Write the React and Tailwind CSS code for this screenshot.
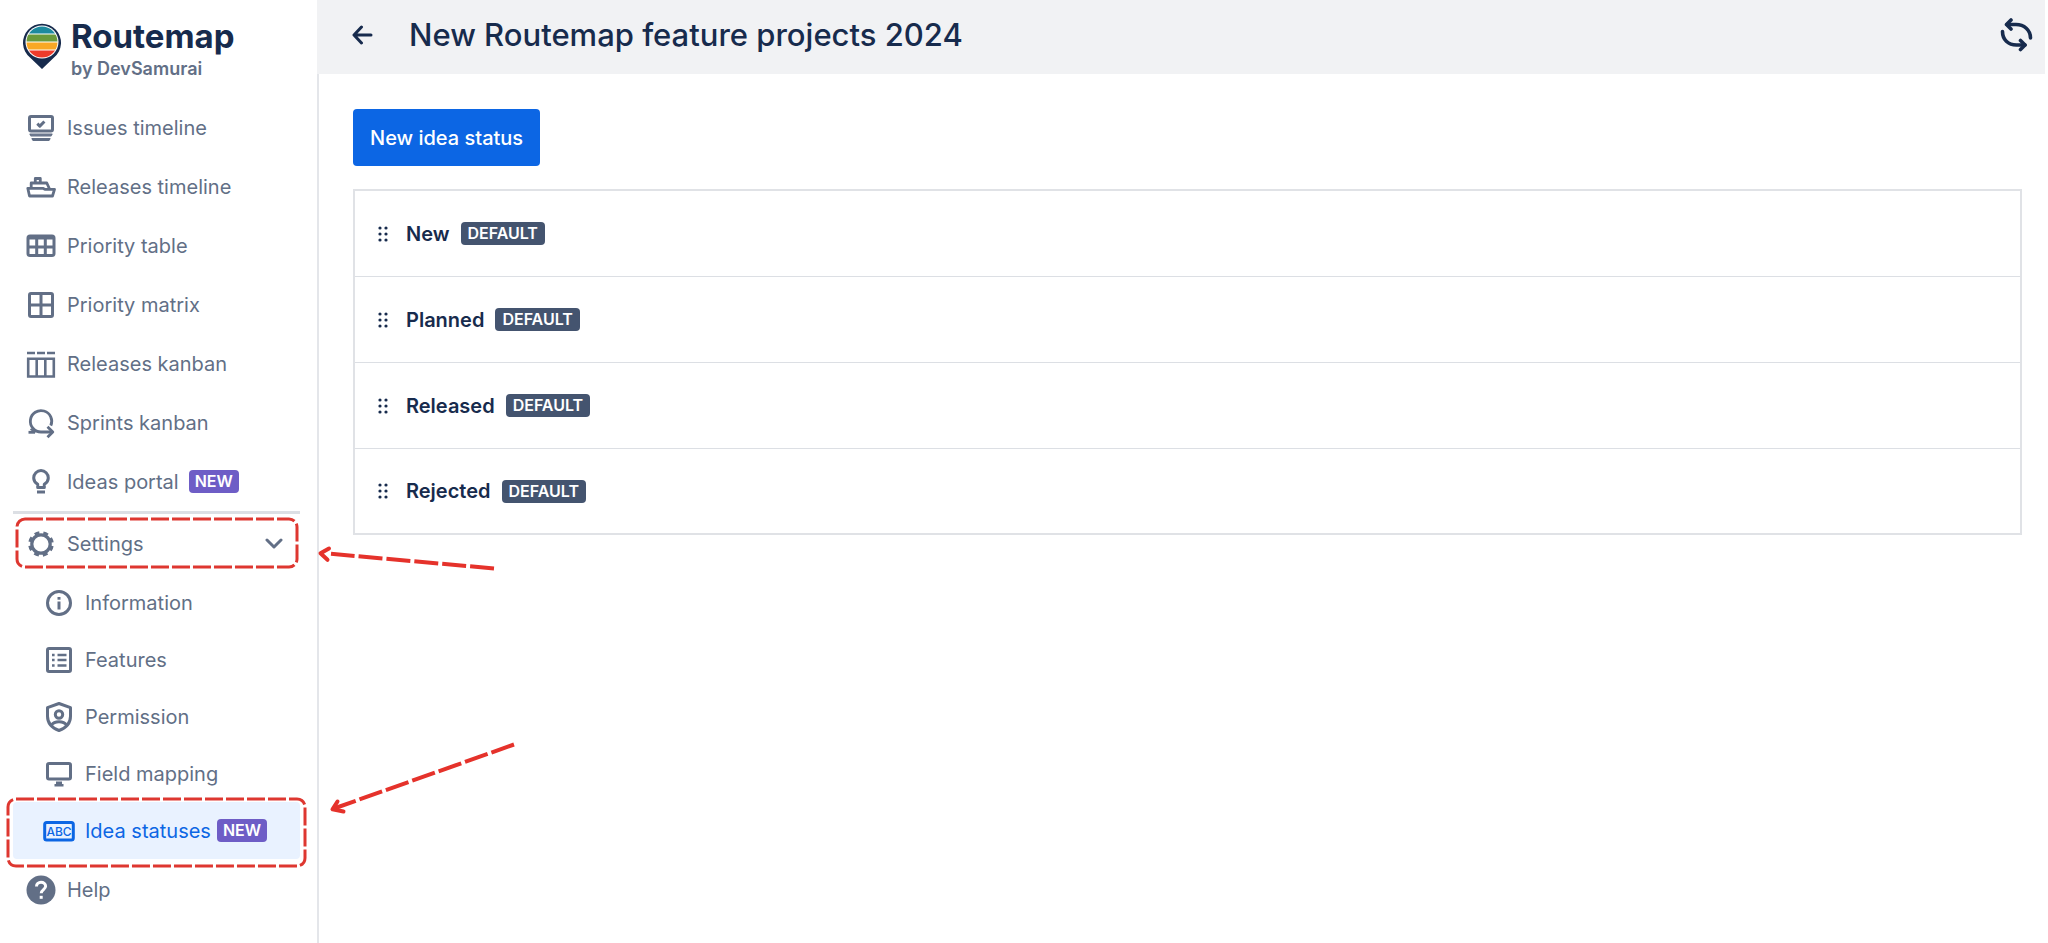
import React, { useState } from 'react';

const LogoMark = () => (
  <svg width="38" height="46" viewBox="0 0 38 46" aria-hidden="true" className="shrink-0">
    <defs>
      <clipPath id="logo-disc">
        <circle cx="19" cy="19" r="15.5" />
      </clipPath>
    </defs>
    <path d="M19 46 L7 34.500 A19 19 0 1 1 31 34.500 Z" fill="#172B4D" />
    <circle cx="19" cy="19" r="16.500" fill="#fff" />
    <g clipPath="url(#logo-disc)">
      <rect x="2" y="3" width="34" height="7.500" fill="#1D8A9E" />
      <rect x="2" y="11.500" width="34" height="7" fill="#6A9A3B" />
      <rect x="2" y="19.500" width="34" height="7" fill="#F9A825" />
      <rect x="2" y="27.500" width="34" height="8" fill="#EE3B2B" />
    </g>
  </svg>
);

const Glyph = ({ children }) => (
  <svg
    width="32"
    height="32"
    viewBox="0 0 32 32"
    fill="none"
    stroke="currentColor"
    strokeWidth="3"
    strokeLinejoin="round"
    aria-hidden="true"
    className="shrink-0"
  >
    {children}
  </svg>
);

const IssuesIcon = () => (
  <Glyph>
    <rect x="4.500" y="4.500" width="23" height="14.500" rx="1.500" />
    <path d="M12.300 11.700l2.500 2.400 4.600-4.600" />
    <path d="M5 22.200h22l-1 1.600H6z" strokeWidth="1.200" fill="currentColor" />
    <path d="M7 26.700h18l-1.200 1.800H8.200z" strokeWidth="1.200" fill="currentColor" />
  </Glyph>
);

const ShipIcon = () => (
  <Glyph>
    <path d="M2.800 17.300h15l2 1h9.700l-2 6.700H4.500z" strokeWidth="2.800" />
    <path d="M6.200 17v-5h15.600l2.500 5.500" strokeWidth="2.800" />
    <path d="M10.300 11.500V7.500h5v4" strokeWidth="2.800" />
  </Glyph>
);

const TableIcon = () => (
  <Glyph>
    <rect x="3" y="6" width="26" height="19.500" rx="2" />
    <path d="M3 7.500h26" strokeWidth="4" />
    <path d="M3 17h26M11.700 8v17M20.300 8v17" />
  </Glyph>
);

const MatrixIcon = () => (
  <Glyph>
    <rect x="4.500" y="4.500" width="23" height="23" rx="1.500" />
    <path d="M16 4v24M4 16h24" />
  </Glyph>
);

const BoardIcon = () => (
  <Glyph>
    <path d="M2 5h8M12 5h8M22 5h8" strokeWidth="2.600" />
    <path d="M3.200 10.800h25.600v17.700H3.200zM11.700 10v19M20.300 10v19" strokeWidth="2.600" strokeLinejoin="miter" />
  </Glyph>
);

const SprintIcon = () => (
  <Glyph>
    <path d="M27 25H16a10.700 10.700 0 1 1 9.800-6.300" strokeWidth="2.800" />
    <path d="M3.500 25.300h6.500" strokeWidth="2.800" />
    <path d="M5.500 22l5 3.300" strokeWidth="2" />
    <path d="M22.500 19.800l5.300 5.200-5.300 5.200" strokeWidth="2.800" />
  </Glyph>
);

const BulbIcon = () => (
  <Glyph>
    <path d="M12.700 21.500v-3.300c-2.300-1.500-4-3.300-4-6.300a7.300 7.300 0 0 1 14.600 0c0 3-1.700 4.800-4 6.300v3.300z" />
    <path d="M12 26h8" />
  </Glyph>
);

const GearIcon = () => (
  <Glyph>
    <circle cx="16" cy="16" r="9.200" strokeWidth="3.200" />
    <circle
      cx="16"
      cy="16"
      r="11"
      strokeWidth="3.600"
      strokeDasharray="4.700 3.940"
      strokeDashoffset="-1.970"
    />
  </Glyph>
);

const InfoIcon = () => (
  <Glyph>
    <circle cx="16" cy="16" r="11.500" />
    <path d="M16 14.500v8" />
    <path d="M16 10v2.700" />
  </Glyph>
);

const FeaturesIcon = () => (
  <Glyph>
    <rect x="4.500" y="4.500" width="23" height="23" rx="1.500" />
    <path d="M9 11h2.600M14.500 11h9M9 16h2.600M14.500 16h9M9 21.500h2.600M14.500 21.500h9" strokeWidth="2.600" />
  </Glyph>
);

const ShieldIcon = () => (
  <Glyph>
    <path d="M16 2.500l11.500 4.200v8.600c0 6.500-4.500 11.700-11.500 14.200C9 27 4.500 21.800 4.500 15.300V6.700z" />
    <circle cx="16" cy="13.500" r="3.700" />
    <path d="M8.500 24c1.500-2.300 4.500-3.200 7.500-3.200s6 .9 7.500 3.200" />
  </Glyph>
);

const MonitorIcon = () => (
  <Glyph>
    <rect x="4.500" y="5.500" width="23" height="15.500" rx="1.500" />
    <path d="M13 23.500h6v2.500h1.500v2.500h-9V26H13z" fill="currentColor" stroke="none" />
  </Glyph>
);

const StatusIcon = () => (
  <Glyph>
    <rect x="1.700" y="7.500" width="28.600" height="17.500" rx="2" />
    <text
      x="16"
      y="20.500"
      textAnchor="middle"
      fontSize="12"
      fontWeight="500"
      fill="currentColor"
      stroke="none"
    >
      ABC
    </text>
  </Glyph>
);

const HelpIcon = () => (
  <Glyph>
    <circle cx="16" cy="16" r="14.500" fill="currentColor" stroke="none" />
    <path
      d="M11.500 12.500c0-2.600 2-4.200 4.500-4.200s4.600 1.600 4.600 4c0 3.200-4.400 3.400-4.400 7"
      stroke="#fff"
    />
    <path d="M16.200 21.800v3" stroke="#fff" />
  </Glyph>
);

const BackIcon = () => (
  <svg width="22" height="22" viewBox="0 0 22 22" fill="none" stroke="currentColor" strokeWidth="3" strokeLinecap="round" strokeLinejoin="round" aria-hidden="true">
    <path d="M19 11H3M9.500 3L2 11l7.500 8" />
  </svg>
);

const RefreshIcon = () => (
  <svg width="34" height="34" viewBox="0 0 34 34" fill="none" stroke="currentColor" strokeWidth="3.600" strokeLinecap="round" strokeLinejoin="round" aria-hidden="true">
    <path d="M7 6.500h9c8 0 14.500 5.500 14.500 13.500" />
    <path d="M11 2L6.500 6.500 11 11" />
    <path d="M25 27h-8.500C8 27 2.500 21.500 2.500 13.500" />
    <path d="M20.500 22.500L25 27l-4.500 4.500" />
  </svg>
);

const DragIcon = () => (
  <svg width="10" height="16" viewBox="0 0 10 16" fill="currentColor" aria-hidden="true">
    {[2, 8, 14].map((y) => (
      <g key={y}>
        <circle cx="2" cy={y} r="1.600" />
        <circle cx="8" cy={y} r="1.600" />
      </g>
    ))}
  </svg>
);

const NewBadge = () => (
  <span className="rounded bg-[#6E5DC6] px-[6px] text-[16px] leading-[23px] font-semibold text-white">NEW</span>
);

// Dashed red frame drawn around a highlighted menu row
const Highlight = ({ className }) => (
  <svg className={`pointer-events-none absolute overflow-visible ${className}`} aria-hidden="true">
    <rect width="100%" height="100%" rx="8" fill="none" stroke="#DE3730" strokeWidth="3" strokeDasharray="18 3" />
  </svg>
);

const mainItems = [
  { label: 'Issues timeline', Icon: IssuesIcon },
  { label: 'Releases timeline', Icon: ShipIcon },
  { label: 'Priority table', Icon: TableIcon },
  { label: 'Priority matrix', Icon: MatrixIcon },
  { label: 'Releases kanban', Icon: BoardIcon },
  { label: 'Sprints kanban', Icon: SprintIcon },
  { label: 'Ideas portal', Icon: BulbIcon, isNew: true },
];

const settingsItems = [
  { label: 'Information', Icon: InfoIcon },
  { label: 'Features', Icon: FeaturesIcon },
  { label: 'Permission', Icon: ShieldIcon },
  { label: 'Field mapping', Icon: MonitorIcon },
  { label: 'Idea statuses', Icon: StatusIcon, isNew: true, active: true },
];

const statuses = ['New', 'Planned', 'Released', 'Rejected'];

const Sidebar = () => {
  const [open, setOpen] = useState(true);

  return (
    <aside className="w-[317px] shrink-0 pr-[17px] pl-[13px] text-[20px] text-[#626F86]">
      <div className="flex h-[98px] gap-[10px] pt-[17px] pl-[10px]">
        <div className="pt-[6px]">
          <LogoMark />
        </div>
        <div>
          <div className="text-[33px] leading-[38px] font-bold text-[#172B4D]">Routemap</div>
          <div className="text-[18px] leading-[28px] font-semibold">by DevSamurai</div>
        </div>
      </div>

      <nav>
        <ul>
          {mainItems.map(({ label, Icon, isNew }) => (
            <li key={label}>
              <a href="#" className="flex h-[59px] items-center gap-[10px] pl-[12px]">
                <Icon />
                {label}
                {isNew && <NewBadge />}
              </a>
            </li>
          ))}
        </ul>

        <hr className="border-t-[3px] border-[#DCDFE4]" />

        <div className="relative">
          <button
            type="button"
            aria-expanded={open}
            onClick={() => setOpen(!open)}
            className="flex h-[60px] w-full cursor-pointer items-center gap-[10px] pr-[17px] pl-[12px]"
          >
            <GearIcon />
            <span>Settings</span>
            <svg width="18" height="12" viewBox="0 0 18 12" fill="none" stroke="currentColor" strokeWidth="3" strokeLinecap="round" strokeLinejoin="round" className="ml-auto" aria-hidden="true">
              <path d="M2 2l7 7 7-7" />
            </svg>
          </button>
          <Highlight className="top-[5px] left-[4px] h-[48px] w-[280px]" />
        </div>

        {open && (
          <ul>
            {settingsItems.map(({ label, Icon, isNew, active }) => (
              <li key={label} className="relative">
                <a
                  href="#"
                  className={`flex h-[57px] items-center gap-[10px] pl-[30px] ${active ? 'rounded bg-[#E9F2FF] text-[#0C66E4]' : ''}`}
                >
                  <Icon />
                  <span className="flex items-center gap-[6px]">
                    {label}
                    {isNew && <NewBadge />}
                  </span>
                </a>
                {active && <Highlight className="-top-[3px] -left-[5px] h-[67px] w-[297px]" />}
              </li>
            ))}
          </ul>
        )}

        <a href="#" className="flex h-[62px] items-center gap-[10px] pl-[12px]">
          <HelpIcon />
          Help
        </a>
      </nav>
    </aside>
  );
};

const App = () => (
  <div className="relative flex min-h-screen bg-white font-['Inter',sans-serif]">
    <Sidebar />

    <div className="flex min-w-0 flex-1 flex-col text-[#172B4D]">
      <header className="mr-[3px] flex h-[74px] items-center bg-[#F1F2F4] pr-[11px] pb-[4px] pl-[35px]">
        <button type="button" aria-label="Back" className="cursor-pointer">
          <BackIcon />
        </button>
        <h1 className="ml-[35px] text-[31px] leading-[40px] font-medium">New Routemap feature projects 2024</h1>
        <button type="button" aria-label="Refresh" className="ml-auto cursor-pointer">
          <RefreshIcon />
        </button>
      </header>

      <main className="flex-1 border-l-2 border-[#E4E6EA] pt-[35px] pr-[26px] pl-[34px]">
        <button type="button" className="h-[57px] cursor-pointer rounded bg-[#0C66E4] px-[17px] text-[20px] font-medium text-white">
          New idea status
        </button>

        <ul className="mt-[23px] divide-y divide-[#DCDFE4] border-2 border-[#E0E2E6]">
          {statuses.map((status) => (
            <li key={status} className="flex h-[86px] items-center pl-[23px] last:h-[84px]">
              <DragIcon />
              <span className="ml-[18px] text-[20px] font-semibold">{status}</span>
              <span className="ml-[11px] rounded bg-[#44546F] px-[7px] text-[16px] leading-[23px] font-semibold text-white">
                DEFAULT
              </span>
            </li>
          ))}
        </ul>
      </main>
    </div>

    {/* Callout arrows */}
    <svg
      width="200"
      height="280"
      viewBox="0 0 200 280"
      fill="none"
      stroke="#E5322B"
      strokeWidth="4"
      className="pointer-events-none absolute top-[545px] left-[317px]"
      aria-hidden="true"
    >
      <path d="M177 23.500L14 8.800" strokeDasharray="24 4" />
      <path d="M12 3.500L3.500 8.300l7 6.500" strokeLinecap="round" strokeLinejoin="round" />
      <path d="M197 199.500L17 263.500" strokeDasharray="24 4" />
      <path d="M20.500 256.500l-5 7.800 11 2.200" strokeLinecap="round" strokeLinejoin="round" />
    </svg>
  </div>
);

export default App;
